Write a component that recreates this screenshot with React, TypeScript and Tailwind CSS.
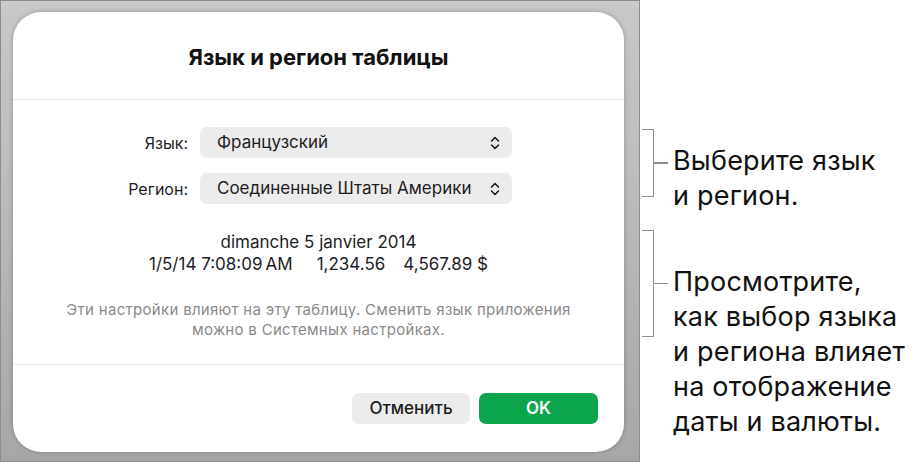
const font = { fontFamily: "Inter, 'Noto Sans', sans-serif" };

function UpDownChevron() {
  return (
    <svg width="10" height="14" viewBox="0 0 10 14" fill="none" stroke="#1d1d1f" strokeWidth="1.6" strokeLinecap="round" strokeLinejoin="round">
      <path d="M1.5 5L5 1.5L8.5 5" />
      <path d="M1.5 9L5 12.5L8.5 9" />
    </svg>
  );
}

function SelectRow({ label, value }: { label: string; value: string }) {
  return (
    <div className="flex items-center">
      <span className="w-[187px] pr-[12px] text-right text-[16px] text-[#1d1d1f]">{label}</span>
      <div className="flex h-[31px] w-[312px] items-center justify-between rounded-[7px] bg-[#ececec] pl-[17px] pr-[12px]">
        <span className="text-[17px] text-[#1d1d1f]">{value}</span>
        <UpDownChevron />
      </div>
    </div>
  );
}

function Callout({ height, lines }: { height: number; lines: string[] }) {
  return (
    <div className="flex items-start">
      <div className="flex items-center" style={{ height }}>
        <div className="h-full w-[12px] border-y-[1.5px] border-r-[1.5px] border-[#8e8e8e]" />
        <div className="h-[1.5px] w-[14px] bg-[#8e8e8e]" />
      </div>
      <div
        className="ml-[5px] text-[27px] leading-[35px] tracking-[0.2px] text-[#111]"
        style={{ marginTop: height / 2 - 20 }}
      >
        {lines.map((l) => (
          <div key={l}>{l}</div>
        ))}
      </div>
    </div>
  );
}

export default function App() {
  return (
    <div className="flex h-[466px] w-[912px] bg-white" style={font}>
      {/* screenshot frame */}
      <div className="h-[462px] w-[640px] border border-[#8d8d8d] bg-gradient-to-b from-[#c9c9c9] to-[#a7a7a7] pl-[12px] pt-[11px]">
        <div className="flex h-[440px] w-[611px] flex-col rounded-[28px] bg-white shadow-[0_0_5px_rgba(0,0,0,0.25)]">
          <div className="flex h-[87px] items-center justify-center pt-[4px]">
            <h1 className="text-[22px] font-bold text-[#111]">Язык и регион таблицы</h1>
          </div>
          <div className="h-px bg-[#e6e6e6]" />

          <div className="mt-[27px] flex flex-col gap-[15px]">
            <SelectRow label="Язык:" value="Французский" />
            <SelectRow label="Регион:" value="Соединенные Штаты Америки" />
          </div>

          <div className="mt-[27px] flex flex-col items-center text-[17px] leading-[22px] text-[#1d1d1f]">
            <div>dimanche 5 janvier 2014</div>
            <div className="flex">
              <span>1/5/14 7:08:09&#8201;AM</span>
              <span className="ml-[24px]">1,234.56</span>
              <span className="ml-[18px]">4,567.89 $</span>
            </div>
          </div>

          <div className="mt-[25px] text-center text-[15px] leading-[20px] tracking-[0.3px] text-[#8a8a8a]">
            <div>Эти настройки влияют на эту таблицу. Сменить язык приложения</div>
            <div>можно в Системных настройках.</div>
          </div>

          <div className="mt-[24px] h-px bg-[#e6e6e6]" />

          <div className="mt-[28px] flex justify-end gap-[9px] pr-[26px]">
            <button className="h-[31px] w-[118px] rounded-[7px] bg-[#ececec] text-[17px] font-medium text-[#1d1d1f]">
              Отменить
            </button>
            <button className="h-[31px] w-[119px] rounded-[7px] bg-[#0ca54b] text-[17px] font-semibold text-white">
              OK
            </button>
          </div>
        </div>
      </div>

      {/* annotations */}
      <div className="ml-[2px] flex flex-col pt-[129px]">
        <Callout height={68} lines={["Выберите язык", "и регион."]} />
        <div className="mt-[17px]">
          <Callout height={107} lines={["Просмотрите,", "как выбор языка", "и региона влияет", "на отображение", "даты и валюты."]} />
        </div>
      </div>
    </div>
  );
}
